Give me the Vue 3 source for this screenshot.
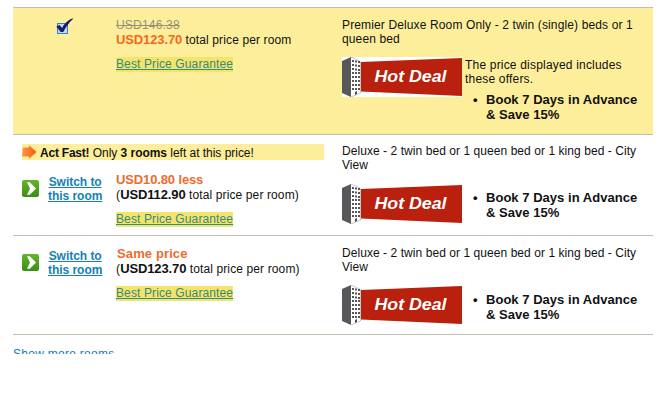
<script setup>
const rooms = [
  {
    id: 1, selected: true, was: 'USD146.38', price: 'USD123.70',
    name: ['Premier Deluxe Room Only - 2 twin (single) beds or 1', 'queen bed'],
    intro: ['The price displayed includes', 'these offers.']
  },
  { id: 2, left: '3 rooms', diff: 'USD10.80 less', price: 'USD112.90', name: ['Deluxe - 2 twin bed or 1 queen bed or 1 king bed - City', 'View'] },
  { id: 3, diff: 'Same price', price: 'USD123.70', name: ['Deluxe - 2 twin bed or 1 queen bed or 1 king bed - City', 'View'] }
]
const windows = []
for (let r = 0; r < 8; r++) {
  for (let c = 0; c < 3; c++) windows.push({ x: 10 + c * 3, y: 3 + r * 4 + (r < 3 ? c * 0.5 : 0) })
}
</script>

<template>
  <main class="page">
    <section v-for="room in rooms" :key="room.id" class="room" :class="'room-' + room.id">
      <div class="left">
        <div v-if="room.left" class="alert">
          <svg class="arrow" width="15" height="14" viewBox="0 0 15 14">
            <defs>
              <linearGradient id="orange" x1="0" y1="0" x2="1" y2="0">
                <stop offset="0" stop-color="#ff9a4a" /><stop offset="1" stop-color="#f8580c" />
              </linearGradient>
            </defs>
            <path d="M.8 2.500H7V.3L14.7 7 7 13.7V11.500H0Z" fill="url(#orange)" />
          </svg>
          <span><b class="act">Act Fast!</b> Only <b>{{ room.left }}</b> left at this price!</span>
        </div>
        <div class="offer">
          <div class="choice">
            <svg v-if="room.selected" class="check" width="18" height="18" viewBox="0 0 18 18">
              <rect x="1.5" y="5.5" width="10" height="10" fill="#b9dcfa" stroke="#3f7fca" />
              <path d="M.3 8.600 3.600 7 6 10C8.500 5.500 11.500 2 16.500 .2L17 1C13 4.500 10 9 7.300 14H4.700Z" fill="#171d63" />
            </svg>
            <template v-else>
              <svg class="go" width="17" height="17" viewBox="0 0 17 17">
                <defs>
                  <linearGradient id="green" x1="0" y1="0" x2="0" y2="1">
                    <stop offset="0" stop-color="#64b52c" /><stop offset="1" stop-color="#3b8d16" />
                  </linearGradient>
                </defs>
                <rect width="17" height="17" rx="2" fill="url(#green)" />
                <path d="M5 2.300H7.800L14 8.500 7.800 14.700H5L8 8.500Z" fill="#fff" />
              </svg>
              <a class="switch">Switch to<br />this room</a>
            </template>
          </div>
          <div class="price">
            <div v-if="room.was" class="was"><s>{{ room.was }}</s></div>
            <div v-else class="diff" :class="{ same: room.id === 3 }">{{ room.diff }}</div>
            <div class="total"><template v-if="!room.selected">(</template><b :class="{ hot: room.selected }">{{ room.price }}</b> total price per room<template v-if="!room.selected">)</template></div>
            <a class="guarantee">Best Price Guarantee</a>
          </div>
        </div>
      </div>
      <div class="details">
        <div class="name">{{ room.name[0] }}<br />{{ room.name[1] }}</div>
        <div class="deal">
          <svg class="badge" width="120" height="40" viewBox="0 0 120 40">
            <rect width="120" height="40" fill="#fff" />
            <path d="M0 4 9 0V40L0 36Z" fill="#58585a" />
            <path d="M9 0 18.500 4.500V36L9 40" fill="#fff" stroke="#8c8c8c" stroke-width=".5" />
            <rect v-for="(w, i) in windows" :key="i" :x="w.x" :y="w.y" width="2" height="2" fill="#55555a" />
            <path d="M13 35 15 34V37L13 38Z" fill="#4c4c50" />
            <path d="M19 5 120 1V39L19 34.500Z" fill="#b9200d" />
            <text x="32.500" y="25" textLength="72" lengthAdjust="spacingAndGlyphs" class="badge-text">Hot Deal</text>
          </svg>
          <div class="includes">
            <div v-if="room.intro" class="intro">{{ room.intro[0] }}<br />{{ room.intro[1] }}</div>
            <ul><li>Book 7 Days in Advance<br />&amp; Save 15%</li></ul>
          </div>
        </div>
      </div>
    </section>
    <div class="more"><a>Show more rooms</a></div>
  </main>
</template>

<style>
body { margin: 0; background: #fff; }
</style>

<style scoped>
.page {
  box-sizing: border-box;
  width: 664px;
  height: 400px;
  padding: 7px 11px 0 13px;
  overflow: hidden;
  font: 12px/14px "Liberation Sans", Arial, sans-serif;
  color: #111;
  white-space: nowrap;
}
svg { display: block; flex: none; }
.room {
  box-sizing: border-box;
  display: flex;
  border-bottom: 1px solid #c3beb0;
}
.room-1 { height: 128px; border-top: 1px solid #c3beb0; background: #fdee9b; }
.room-2 { height: 101px; }
.room-3 { height: 99px; }
.left { width: 329px; flex: none; }
.alert {
  display: flex;
  align-items: center;
  gap: 3px;
  height: 16px;
  margin: 9px 18px 0 9px;
  background: #fdee9b;
  letter-spacing: -.03px;
}
.alert span { padding-top: 1px; }
.act { letter-spacing: -.22px; }
.offer { display: flex; }
.choice { width: 103px; flex: none; display: flex; align-items: flex-start; }
.check { margin: 10px 0 0 43px; }
.go { margin: 20px 0 0 9px; }
.switch { margin: 15px 0 0 9px; text-align: center; font-weight: bold; letter-spacing: -.04px; }
a { color: #1480b8; text-decoration: underline; }
.room-3 .go { margin-top: 18px; }
.room-3 .switch { margin-top: 13px; }
.price { padding-top: 10px; }
.room-2 .price { padding-top: 12px; }
.was { height: 14px; line-height: 14px; color: #96927a; letter-spacing: .2px; }
.diff { height: 15px; line-height: 15px; font-size: 13px; font-weight: bold; color: #ee6b2b; letter-spacing: -.13px; }
.diff.same { letter-spacing: .12px; padding-left: 1px; }
.total { height: 15px; line-height: 15px; letter-spacing: .12px; }
.total b { font-size: 13px; letter-spacing: -.12px; }
.total .hot { color: #f26a1b; }
.guarantee {
  display: inline-block;
  margin-top: 10px;
  height: 15px;
  line-height: 14px;
  color: #348b80;
  background: #f5e46c;
  letter-spacing: .12px;
}
.details { flex: 1; padding-top: 10px; }
.room-2 .details { padding-top: 9px; }
.name { height: 28px; letter-spacing: .06px; }
.room-1 .name { letter-spacing: .13px; }
.deal { display: flex; gap: 3px; padding-top: 11px; }
.room-2 .deal { padding-top: 12px; }
.badge-text { font: italic bold 16px "Liberation Sans", Arial, sans-serif; fill: #fff; }
.intro { margin-top: 1px; letter-spacing: .19px; }
ul { margin: 6px 0 0 21px; padding: 0; list-style: none; }
.room-3 ul { margin-top: 7px; }
li { position: relative; font-size: 13px; line-height: 15px; font-weight: bold; letter-spacing: .03px; }
li::before { content: "•"; position: absolute; left: -13px; }
.more { height: 7px; margin-top: 12px; overflow: hidden; line-height: 14px; letter-spacing: .28px; }
</style>
